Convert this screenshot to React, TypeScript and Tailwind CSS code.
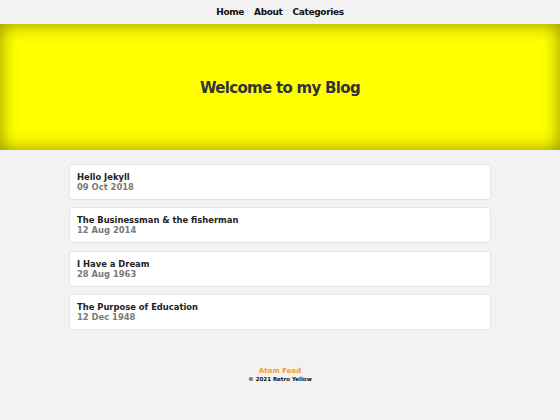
const posts = [
  { title: "Hello Jekyll", date: "09 Oct 2018" },
  { title: "The Businessman & the fisherman", date: "12 Aug 2014" },
  { title: "I Have a Dream", date: "28 Aug 1963" },
  { title: "The Purpose of Education", date: "12 Dec 1948" },
];

export default function App() {
  return (
    <div
      className="min-h-[420px] bg-[#f2f2f2] text-[#222]"
      style={{ fontFamily: '"DejaVu Sans", "Liberation Sans", sans-serif' }}
    >
      <nav className="flex h-[24px] items-center justify-center gap-[10px] pt-[2px] text-[9px] font-bold tracking-[-0.35px] text-[#111]">
        <a>Home</a>
        <a>About</a>
        <a>Categories</a>
      </nav>
      <header className="flex h-[126px] items-center justify-center bg-[#ffff00] shadow-[inset_0_0_18px_rgba(0,0,0,0.45)]">
        <h1 className="pt-[2px] text-[15px] font-bold tracking-[-0.7px] text-[#333]">Welcome to my Blog</h1>
      </header>
      <main className="mx-auto flex w-[422px] flex-col gap-[7.3px] pt-[14px]">
        {posts.map((p) => (
          <div
            key={p.title}
            className="flex h-[36px] flex-col justify-center rounded-[3px] border border-[#e4e4e4] bg-white px-[7px]"
          >
            <div className="text-[8.4px] font-bold leading-[10px]">{p.title}</div>
            <div className="text-[8.4px] font-bold leading-[10px] text-[#7a7a7a]">{p.date}</div>
          </div>
        ))}
      </main>
      <footer className="mt-[37px] flex flex-col items-center text-[7px] font-bold leading-[8px]">
        <a className="text-[#f0a020]">Atom Feed</a>
        <div className="text-[5.5px] text-[#111]">© 2021 Retro Yellow</div>
      </footer>
    </div>
  );
}
